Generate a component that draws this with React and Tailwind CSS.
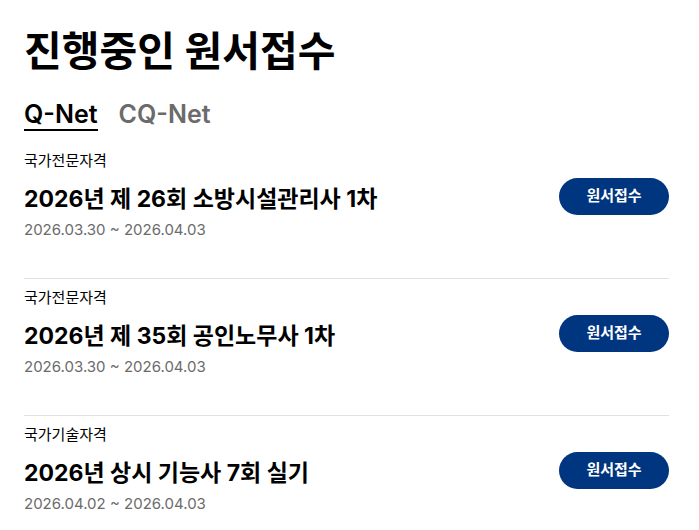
const items = [
  { category: '국가전문자격', title: '2026년 제 26회 소방시설관리사 1차', period: '2026.03.30 ~ 2026.04.03' },
  { category: '국가전문자격', title: '2026년 제 35회 공인노무사 1차', period: '2026.03.30 ~ 2026.04.03' },
  { category: '국가기술자격', title: '2026년 상시 기능사 7회 실기', period: '2026.04.02 ~ 2026.04.03' },
];

const App = () => {
  return (
    <div className="min-h-screen bg-white pl-6 pr-[30px] pt-[27px] font-['Inter','Noto_Sans_CJK_KR',sans-serif] text-black">
      <h1 className="text-[41px] font-bold leading-[48px]">진행중인 원서접수</h1>

      <div className="mt-[25px] flex items-end gap-[21px]">
        <button className="border-b-2 border-black pb-[1px] text-[25px] font-semibold leading-[28px]">Q-Net</button>
        <button className="pb-[3px] text-[25px] font-semibold leading-[28px] text-[#6b6b6b]">CQ-Net</button>
      </div>

      <ul className="mt-[20px]">
        {items.map((item, i) => (
          <li
            key={i}
            className={`flex items-center justify-between ${i > 0 ? 'border-t border-[#dbe3e8] pt-[9px]' : ''} pb-[37px]`}
          >
            <div>
              <p className="text-[15px] leading-[20px]">{item.category}</p>
              <p className="mt-[13px] text-[23px] font-bold leading-[30px]">{item.title}</p>
              <p className="mt-[5px] text-[15px] leading-[22px] text-[#6b6b6b]">{item.period}</p>
            </div>
            <button className="h-[37px] w-[110px] rounded-full bg-[#003580] text-[15px] font-bold text-white">
              원서접수
            </button>
          </li>
        ))}
      </ul>
    </div>
  );
};

export default App;
